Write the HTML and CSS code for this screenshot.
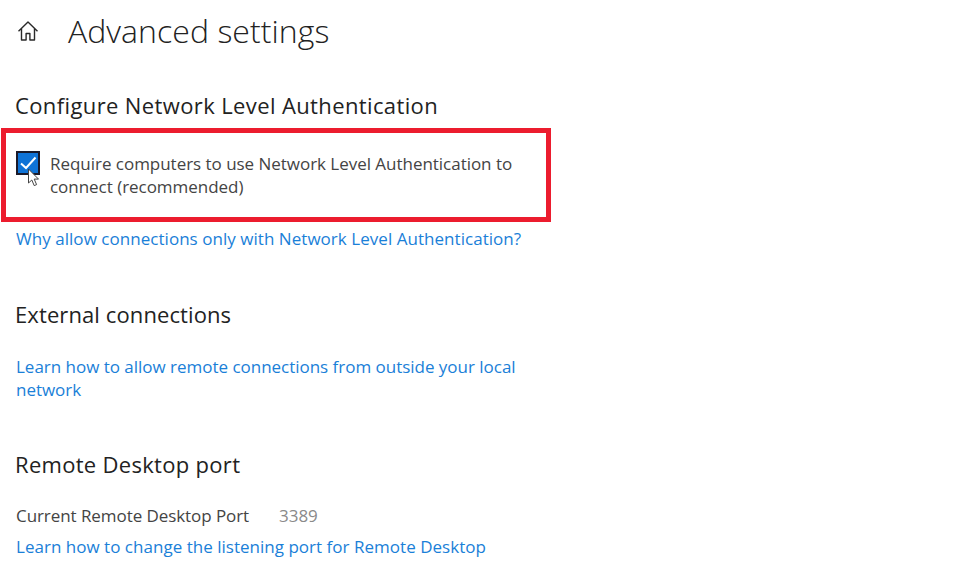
FILE: index.html
```html
<!DOCTYPE html>
<html lang="en">
<head>
<meta charset="utf-8">
<title>Advanced settings</title>
<link rel="stylesheet" href="styles.css">
</head>
<body>
<main class="page">
  <header class="title-row">
    <svg class="home" viewBox="0 0 24 24" width="24" height="24" aria-hidden="true">
      <path d="M2.5 12.2 12 3l9.5 9.2M5.5 9.6V21h4.6v-6.5h3.8V21h4.6V9.6" fill="none" stroke="#2a2a2a" stroke-width="1.4" stroke-linejoin="round"/>
    </svg>
    <h1 class="title">Advanced settings</h1>
  </header>

  <h2 class="heading heading-first">Configure Network Level Authentication</h2>
  <div class="highlight">
    <div class="check">
      <svg class="checkbox" viewBox="0 0 24 24" width="24" height="24" aria-hidden="true">
        <rect x="1" y="1" width="22" height="22" fill="#0f73d6" stroke="#1a1a2a" stroke-width="2"/>
        <path d="M5 12.5 10 17 19.5 6.5" fill="none" stroke="#fff" stroke-width="2"/>
      </svg>
      <svg class="cursor" viewBox="0 0 14 20" width="14" height="20" aria-hidden="true">
        <path d="M1.5 1v14l3.3-3 2.4 5.6 2.4-1-2.4-5.5h4.3z" fill="#fff" stroke="#444" stroke-width="1"/>
      </svg>
    </div>
    <p class="check-label">Require computers to use Network Level Authentication to connect (recommended)</p>
  </div>
  <a class="link link-why" href="#">Why allow connections only with Network Level Authentication?</a>

  <h2 class="heading heading-external">External connections</h2>
  <a class="link link-wrap" href="#">Learn how to allow remote connections from outside your local network</a>

  <h2 class="heading heading-port">Remote Desktop port</h2>
  <div class="port-row"><span class="port-label">Current Remote Desktop Port</span><span class="port-value">3389</span></div>
  <a class="link link-change" href="#">Learn how to change the listening port for Remote Desktop</a>
</main>
</body>
</html>
```
FILE: styles.css
```css
html, body {
  margin: 0;
  padding: 0;
  background: #fff;
}
body {
  width: 980px;
  height: 572px;
  overflow: hidden;
  font-family: "Open Sans", "Noto Sans", "Liberation Sans", sans-serif;
  color: #333;
}
.page {
  display: flex;
  flex-direction: column;
  align-items: flex-start;
  padding: 9px 0 0 16px;
}
.title-row {
  display: flex;
  align-items: center;
  gap: 28px;
  height: 44px;
}
.home {
  display: block;
}
.title {
  margin: 0;
  font-size: 32px;
  font-weight: 300;
  line-height: 44px;
  letter-spacing: 0.05px;
  color: #222;
}
.heading {
  margin: 0 0 0 -1px;
  font-size: 22px;
  font-weight: 400;
  line-height: 28px;
  letter-spacing: 0.3px;
  color: #222;
}
.heading-first {
  margin-top: 38px;
  letter-spacing: 0.38px;
}
.highlight {
  box-sizing: border-box;
  width: 550px;
  height: 94px;
  margin: 9px 0 0 -15px;
  padding: 18px 20px 0 10px;
  border: 5px solid #ec1c2e;
  display: flex;
  gap: 10px;
}
.check {
  position: relative;
  flex: none;
  width: 24px;
  height: 24px;
}
.checkbox {
  display: block;
}
.cursor {
  position: absolute;
  left: 11px;
  top: 17px;
}
.check-label {
  margin: 1px 0 0;
  font-size: 17px;
  line-height: 23px;
  letter-spacing: -0.03px;
  color: #444;
}
.link {
  display: block;
  font-size: 17px;
  line-height: 23px;
  letter-spacing: -0.02px;
  color: #1a80d8;
  text-decoration: none;
}
.link-why {
  margin-top: 5px;
  letter-spacing: 0.04px;
}
.heading-external {
  margin-top: 50px;
  letter-spacing: 0.1px;
}
.link-wrap {
  width: 510px;
  margin-top: 27px;
}
.heading-port {
  margin-top: 49px;
}
.port-row {
  display: flex;
  gap: 30px;
  margin-top: 26px;
  font-size: 17px;
  line-height: 23px;
  letter-spacing: -0.07px;
}
.port-label {
  color: #444;
}
.port-value {
  color: #8a8a8a;
}
.link-change {
  margin-top: 8px;
  letter-spacing: 0.02px;
}
```
